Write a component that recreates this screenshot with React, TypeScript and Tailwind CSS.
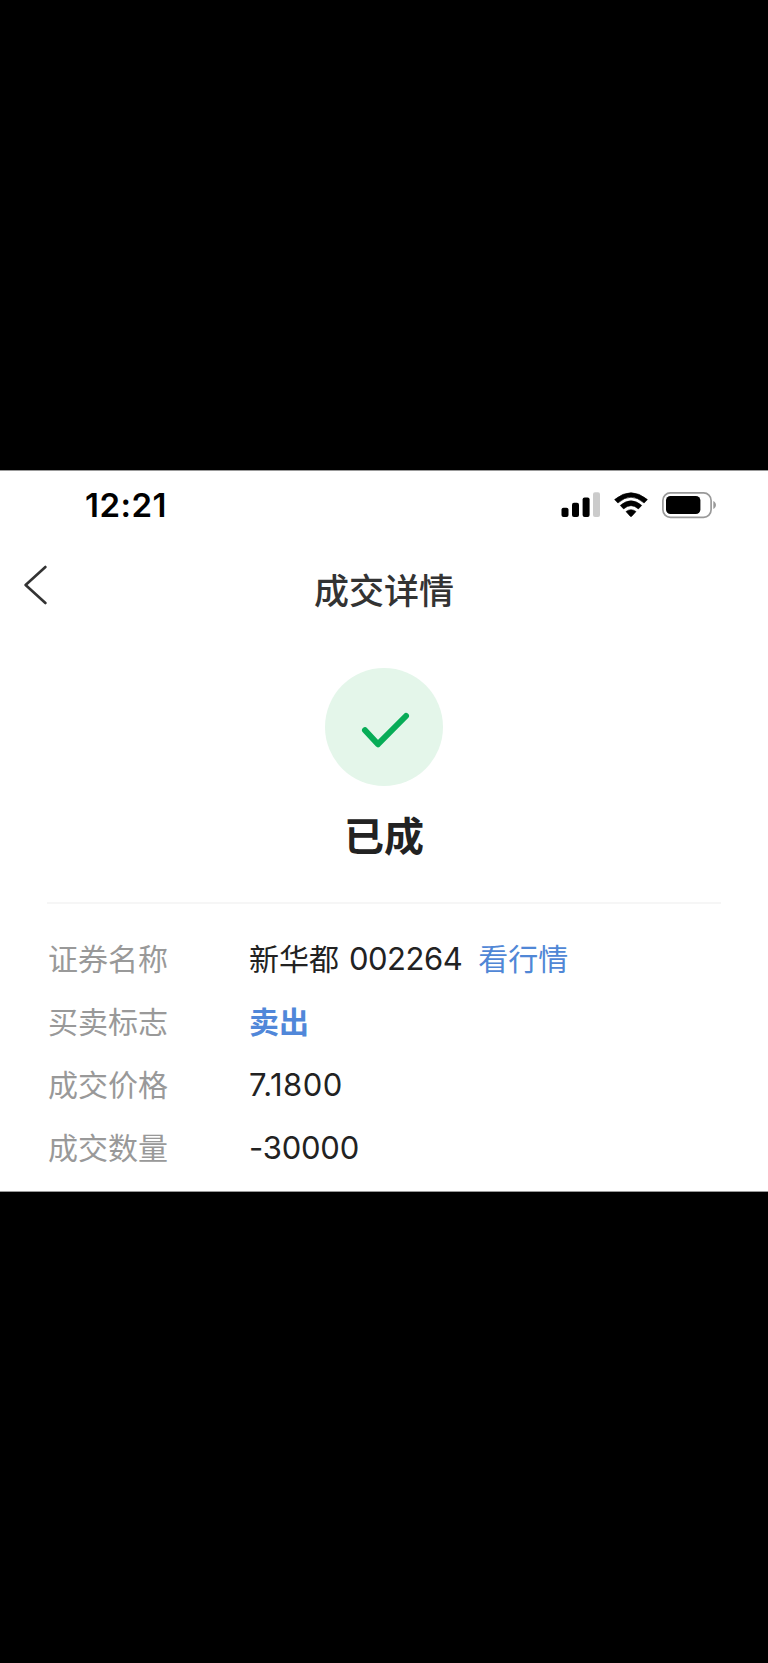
import type { ReactNode } from 'react';

function StatusBar() {
  return (
    <div className="flex h-[68px] items-center justify-between pl-[85px] pr-[51px]">
      <span className="text-[33px] font-semibold leading-[68px] tracking-[0.5px] text-black">12:21</span>
      <div className="flex items-center">
        {/* Signal */}
        <svg width="39" height="26" viewBox="0 0 39 26">
          <rect x="0.5" y="15.7" width="7" height="9.2" rx="2" fill="#000" />
          <rect x="11" y="10.7" width="7" height="14.2" rx="2" fill="#000" />
          <rect x="21.6" y="5.5" width="7" height="19.4" rx="2" fill="#000" />
          <rect x="32" y="0.2" width="7" height="24.7" rx="2" fill="#cbcbcb" />
        </svg>
        {/* Wifi */}
        <svg className="ml-[14px]" width="34" height="26" viewBox="0 0 34 26">
          <path d="M0.6 7.6 Q17 -6.2 33.4 7.6 L30.1 11 Q17 -0.6 3.9 11 Z" fill="#000" stroke="#000" strokeWidth="0.6" strokeLinejoin="round" />
          <path d="M6.3 13.4 Q17 4.2 27.7 13.4 L24.4 16.9 Q17 10.4 9.6 16.9 Z" fill="#000" stroke="#000" strokeWidth="0.6" strokeLinejoin="round" />
          <path d="M12 19.6 Q17 15.8 22 19.6 L17.8 24.2 Q17 25 16.2 24.2 Z" fill="#000" stroke="#000" strokeWidth="0.6" strokeLinejoin="round" />
        </svg>
        {/* Battery */}
        <svg className="ml-[14px]" width="55" height="27" viewBox="0 0 55 27">
          <rect x="0.9" y="0.9" width="48.2" height="24.4" rx="7.5" fill="none" stroke="#999" strokeWidth="1.7" />
          <rect x="4" y="3.9" width="34.4" height="18.2" rx="4.5" fill="#000" />
          <path d="M51.3 9.1 C54.8 10.6 54.8 15.6 51.3 17.1 Z" fill="#999" />
        </svg>
      </div>
    </div>
  );
}

function Header() {
  return (
    <div className="grid h-[102px] grid-cols-[1fr_auto_1fr] items-center px-[23px]">
      <svg className="mb-[10px]" width="24" height="40" viewBox="0 0 24 40">
        <path d="M22.4 2 L2.6 20 L22.4 38" fill="none" stroke="#333" strokeWidth="2.6" strokeLinecap="round" strokeLinejoin="round" />
      </svg>
      <h1 className="mt-[2px] text-[35px] font-medium leading-[48px] text-[#333]">成交详情</h1>
    </div>
  );
}

function Row({ label, children }: { label: string; children: ReactNode }) {
  return (
    <div className="flex h-[63px] items-center text-[30px] leading-[44px]">
      <span className="w-[201px] text-[#999]">{label}</span>
      <div className="flex items-center text-[#222]">{children}</div>
    </div>
  );
}

export default function App() {
  return (
    <div className="h-[1663px] w-[768px] bg-black pt-[470px] font-['Inter','Noto_Sans_CJK_SC',sans-serif]">
      <div className="h-[722px] overflow-hidden border-y border-[#999] bg-white">
        <StatusBar />
        <Header />

        {/* Result */}
        <div className="flex flex-col items-center pt-[27px]">
          <div className="flex size-[118px] items-center justify-center rounded-full bg-[#e4f6ea] pl-px pt-[7px]">
            <svg width="50" height="38" viewBox="0 0 50 38">
              <path d="M5 18.2 L18 32.2 L46 4" fill="none" stroke="#07ac57" strokeWidth="6" strokeLinecap="round" strokeLinejoin="round" />
            </svg>
          </div>
          <p className="mt-[21px] text-[40px] font-bold leading-[60px] text-[#222]">已成</p>
        </div>

        <div className="mx-[47px] mt-[35px] h-[2px] bg-[#f6f6f6]" />

        {/* Details */}
        <div className="pl-[48px] pt-[23px]">
          <Row label="证券名称">
            <span>新华都</span>
            <span className="ml-[10px] text-[31px] tracking-[-0.5px]">002264</span>
            <a className="ml-[16px] text-[#5087d6]">看行情</a>
          </Row>
          <Row label="买卖标志">
            <span className="font-bold text-[#5087d9]">卖出</span>
          </Row>
          <Row label="成交价格">
            <span className="text-[31px] tracking-[0.5px]">7.1800</span>
          </Row>
          <Row label="成交数量">
            <span className="text-[31px] tracking-[-0.2px]">-30000</span>
          </Row>
        </div>
      </div>
    </div>
  );
}
